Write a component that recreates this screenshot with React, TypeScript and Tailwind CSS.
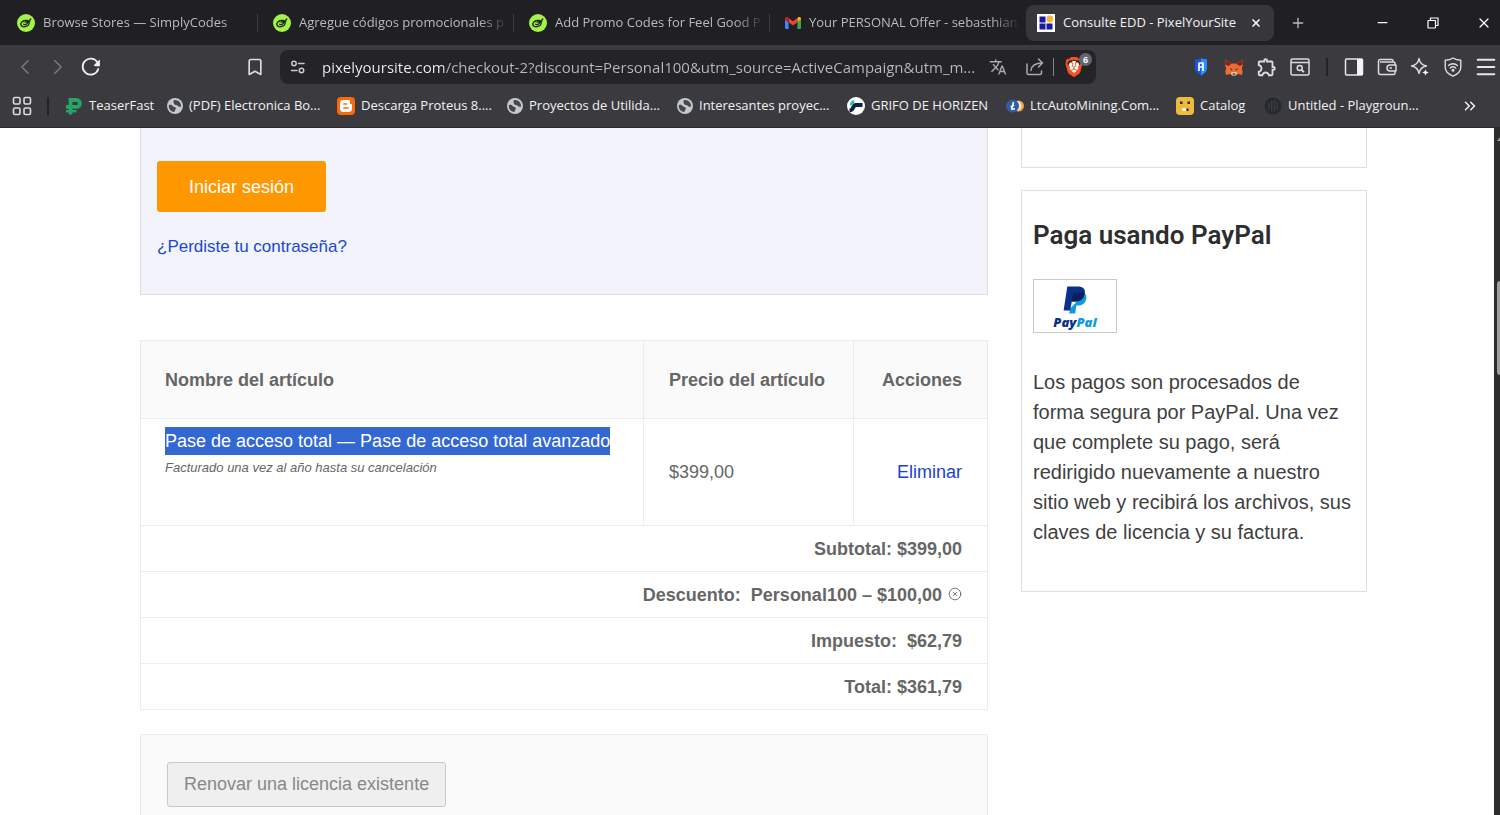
import type { ReactNode } from 'react';
import {
  Bookmark,
  ChevronLeft,
  ChevronRight,
  ChevronsRight,
  CircleX,
  Menu,
  Minus,
  Plus,
  X,
} from 'lucide-react';
import { MdOutlineExtension, MdTranslate } from 'react-icons/md';
import { SiBlogger, SiBrave } from 'react-icons/si';

const SimplyCodesIcon = () => (
  <svg viewBox="0 0 18 18" className="size-[18px] shrink-0">
    <circle cx="9" cy="9" r="9" fill="#a4f24a" />
    <ellipse
      cx="8"
      cy="9.6"
      rx="4.3"
      ry="3"
      transform="rotate(-20 8 9.6)"
      fill="none"
      stroke="#1c2a12"
      strokeWidth="1.5"
    />
    <path
      d="M6.6 10.2c1.600 1 3.200 0 4.200-1.600L13.800 5M8 8.200c1.500-.8 3-.6 4.800-.9"
      fill="none"
      stroke="#1c2a12"
      strokeWidth="1.3"
      strokeLinecap="round"
    />
  </svg>
);

const GmailIcon = () => (
  <svg viewBox="0 0 16 12" className="h-3 w-4 shrink-0">
    <path d="M0 2v9a1 1 0 0 0 1 1h2.600V5.200L0 2.500z" fill="#4285f4" />
    <path d="M12.400 5.200V12H15a1 1 0 0 0 1-1V2.500z" fill="#34a853" />
    <path d="M12.400 1v4.300L16 2.600V1.600C16 .2 14.400-.5 13.300.3z" fill="#fbbc04" />
    <path d="M3.600 5.300V1L8 4.300 12.400 1v4.300L8 8.600z" fill="#ea4335" />
    <path d="M0 1.600v1l3.600 2.700V1L2.700.3C1.600-.5 0 .2 0 1.600z" fill="#c5221f" />
  </svg>
);

const PixelIcon = () => (
  <svg viewBox="0 0 18 18" className="size-[18px] shrink-0">
    <path d="M0 0h18v18H0z" fill="#fff" />
    <path d="M2.500 2.500h6v6h-6zM2.500 9.500h6v6h-6zM9.500 9.500h6v6h-6z" fill="#1b1ba0" />
    <circle cx="12.800" cy="5" r="3.400" fill="#f4b63f" />
  </svg>
);

const TeaserFastIcon = () => (
  <svg viewBox="0 0 18 18" className="size-[18px] shrink-0" fill="none" stroke="#27a567">
    <path d="M5.500 17.500V3h6a3.400 3.400 0 0 1 0 6.800H1" strokeWidth="3.800" />
    <path d="M1 14.200h10.500" strokeWidth="2.400" />
  </svg>
);

const GlobeIcon = () => (
  <svg viewBox="0 0 16 16" className="size-4 shrink-0">
    <circle cx="8" cy="8" r="8" fill="#c4c7cb" />
    <path
      d="M1.800 7.200c1.200-.6 3.200-.5 3.800.8.500 1.200 3.500.5 3.200 2.700-.2 1.300-1.300 1.300-1.300 3.300C4 13.800 1.500 11 1.800 7.200zM7 2c3.900-.6 7.400 2.500 7.100 6.500-1.200.6-2.800.4-3.500-.7-.6-1-3.400-.4-3.700-2.200C6.800 4.300 5.900 3.500 7 2z"
      fill="#46474c"
    />
  </svg>
);

const HorizenIcon = () => (
  <svg viewBox="0 0 18 18" className="size-[18px] shrink-0">
    <circle cx="9" cy="9" r="9" fill="#fff" />
    <path d="M3 7a5 5 0 0 1 4-4l.5 3.500L3.500 9z" fill="#26c6b4" />
    <path d="M2.500 13.200H4c2 0 2-5.200 5-5.200h6.500" fill="none" stroke="#0e2145" strokeWidth="4" />
  </svg>
);

const LtcIcon = () => (
  <svg viewBox="0 0 18 14" className="h-[14px] w-[18px] shrink-0">
    <circle cx="12.500" cy="7" r="5.500" fill="#f0a23c" />
    <circle cx="10.500" cy="7" r="5" fill="#e8e8ee" />
    <circle cx="6.500" cy="7" r="6.500" fill="#345d9d" />
    <path d="M7.500 3 5.800 10H9M4.600 7.800l3.600-1.400" fill="none" stroke="#fff" strokeWidth="1.500" />
  </svg>
);

const CatalogIcon = () => (
  <svg viewBox="0 0 18 18" className="size-[18px] shrink-0">
    <rect width="18" height="18" rx="4" fill="#eebb3d" />
    <path d="M4 4.500h2.500V7H4zM11.500 4.500H14V7h-2.500zM10.500 11.500H12.500V14h-2z" fill="#33270c" />
    <path d="M6 11.200h4v2.600H6z" fill="#fff" />
  </svg>
);

const PlaygroundIcon = () => (
  <svg viewBox="0 0 18 18" className="size-[18px] shrink-0">
    <circle cx="9" cy="9" r="8.500" fill="#27292f" />
    <path d="M7.700 3.500v11M10.300 3.500v11M5 5.500v7M13 5.500v7" stroke="#3d4148" strokeWidth="1.200" />
  </svg>
);

const BloggerIcon = () => (
  <span className="flex size-[18px] shrink-0 items-center justify-center rounded-sm bg-[#f76b0e]">
    <svg viewBox="0 0 12 12" className="size-3">
      <rect width="12" height="12" rx="3.500" fill="#fff" />
      <path d="M3.800 4h2.700M3.800 8h4.400" stroke="#f76b0e" strokeWidth="1.500" strokeLinecap="round" />
      <path d="M10 0h2v4.200h-.8C10.300 4.200 10 3.500 10 2.500z" fill="#f76b0e" />
    </svg>
  </span>
);

const AppsIcon = () => (
  <svg viewBox="0 0 20 20" className="size-5" fill="none" stroke="#dcdce0" strokeWidth="1.600">
    <rect x="1.500" y="1.500" width="6.500" height="6.500" rx="1.500" />
    <rect x="12" y="1.500" width="6.500" height="6.500" rx="1.500" />
    <rect x="1.500" y="12" width="6.500" height="6.500" rx="1.500" />
    <rect x="12" y="12" width="6.500" height="6.500" rx="1.500" />
  </svg>
);

const ReloadIcon = () => (
  <svg viewBox="0 0 20 20" className="size-5" fill="none">
    <path d="M17.300 12A8 8 0 1 1 16.600 5.600" stroke="#f0f0f2" strokeWidth="1.800" strokeLinecap="round" />
    <path d="M18.900 2.500v6.700h-4.600c-1.300 0-1.500-1.300-.6-2z" fill="#f0f0f2" />
  </svg>
);

const TuneIcon = () => (
  <svg viewBox="0 0 16 16" className="size-4" fill="none" stroke="#c9c9ce" strokeWidth="1.500">
    <circle cx="4" cy="4.500" r="2.200" />
    <circle cx="11.500" cy="11.500" r="2.200" />
    <path d="M8.500 4.500H14M1.500 11.500H7" strokeLinecap="round" />
  </svg>
);

const ShareIcon = () => (
  <svg viewBox="0 0 20 20" className="size-5" fill="none" stroke="#a9a9ae" strokeWidth="1.500" strokeLinejoin="round" strokeLinecap="round">
    <path d="M2 7v9a1.500 1.500 0 0 0 1.500 1.500H15a1.500 1.500 0 0 0 1.500-1.500v-2" />
    <path d="M6 13.500C6.500 8.500 9.500 6 17.500 6M13.500 2l4 4-4 4" />
  </svg>
);

const ShieldExtensionIcon = () => (
  <svg viewBox="0 0 20 20" className="size-5">
    <path d="M4 2.500 10 1.500l6 1v8.500c0 3.500-3 5.800-6 7.500-3-1.700-6-4-6-7.500z" fill="#1557e0" />
    <path d="M10 1.500l6 1v8.500c0 3.500-3 5.800-6 7.500z" fill="#2f8cf5" />
    <path d="M8 14V5.500M12 14V5.500M8 10h4M8 6h4" stroke="#fff" strokeWidth="1.700" />
  </svg>
);

const FoxIcon = () => (
  <svg viewBox="0 0 20 20" className="size-5">
    <path d="M1.500 2.500 8 6.500h4l6.500-4 .5 5-1.200 4 .9 3.500-1 3-4-1-2 1.500H8L6.200 17l-4 1-1-3 1-3.500L1 7.500z" fill="#ee6b33" />
    <path d="M1.500 2.500 8 6.500 4.500 9 1 7.500zM18.500 2.500 12 6.500 15.500 9 19 7.500z" fill="#7d2a17" />
    <path d="M7.500 15h5l.5 2-1.500 1.500H8.300L7 17z" fill="#d9c5b6" />
    <path d="M5.500 11.500 8.500 12l-.5 1.500zM14.500 11.500l-3 .5.5 1.500z" fill="#2b2f38" />
    <path d="M8.500 16.500h3l-.5 1.200H9z" fill="#2b2f38" />
  </svg>
);

const SearchTabsIcon = () => (
  <svg viewBox="0 0 20 20" className="size-5" fill="none" stroke="#dcdce0" strokeWidth="1.500">
    <rect x="1" y="2" width="18" height="16" rx="1.500" />
    <path d="M1 5.500h18" />
    <circle cx="9.700" cy="11" r="2.500" />
    <path d="m11.600 13 2.400 2.200" strokeWidth="1.800" />
  </svg>
);

const SidebarIcon = () => (
  <svg viewBox="0 0 20 20" className="size-5">
    <rect x="1.500" y="2" width="17" height="16" rx="1" fill="none" stroke="#e6e6e8" strokeWidth="1.500" />
    <path d="M13 2h6v16h-6z" fill="#f4f4f5" />
  </svg>
);

const WalletIcon = () => (
  <svg viewBox="0 0 20 20" className="size-5" fill="none" stroke="#dcdce0" strokeWidth="1.500" strokeLinejoin="round">
    <path d="M18 8V6.500A1.500 1.500 0 0 0 16.500 5H3M18 14v2a1.500 1.500 0 0 1-1.500 1.500h-13A2 2 0 0 1 1.500 15.500V4A1.500 1.500 0 0 1 3 2.500h11.500A1.500 1.500 0 0 1 16 4v1" />
    <path d="M13 8h6v6h-6a3 3 0 0 1 0-6zM12.500 11H15" />
  </svg>
);

const SparkleIcon = () => (
  <svg viewBox="0 0 20 20" className="size-5" fill="none" stroke="#dcdce0" strokeWidth="1.500" strokeLinejoin="round">
    <path d="M9 1.500c.8 4.800 2.700 6.700 7.500 7.500-4.800.8-6.700 2.700-7.500 7.500C8.200 11.700 6.300 9.800 1.500 9 6.300 8.200 8.200 6.300 9 1.500z" />
    <path d="M15.500 12c.4 2.300 1.200 3.100 3.500 3.500-2.300.4-3.100 1.200-3.500 3.500-.4-2.300-1.200-3.100-3.500-3.500 2.300-.4 3.100-1.200 3.500-3.500z" fill="#f4f4f5" stroke="none" />
  </svg>
);

const VpnIcon = () => (
  <svg viewBox="0 0 20 20" className="size-5" fill="none" stroke="#dcdce0" strokeWidth="1.400" strokeLinecap="round" strokeLinejoin="round">
    <path d="M10 1c2 1.500 4.500 2.300 7.800 2.300V10c0 4.500-3.300 7.300-7.800 9.200C5.500 17.300 2.200 14.500 2.200 10V3.300C5.500 3.300 8 2.500 10 1z" />
    <path d="M5.500 8.500a6.500 6.500 0 0 1 9 0M7.300 11a4 4 0 0 1 5.400 0" />
    <circle cx="10" cy="13.300" r=".8" fill="#dcdce0" />
  </svg>
);

const RestoreIcon = () => (
  <svg viewBox="0 0 12 12" className="size-3" fill="none" stroke="#fff" strokeWidth="1.200">
    <rect x="1" y="3.500" width="7.500" height="7.500" rx=".5" />
    <path d="M3.500 3.500V1H11v7.500H8.500" />
  </svg>
);

const PayPalMark = () => (
  <svg viewBox="0 0 24 28" className="h-7 w-6">
    <path d="M21.300 7.300c1.900 1.300 2.400 3.400 1.800 6-1 4.600-4 6.200-8.300 6.200h-1.400L12.200 27.500H6.300l.8-4.800z" fill="#0f9be0" />
    <path d="M4.300.5h10.500c5 0 8 2.300 7 7.500-1.100 5.600-4.700 7.600-10.300 7.600H8.800L7.200 24.500H.6z" fill="#0a3087" />
    <path d="M10.300 6.500h8.200c1.200 0 2.200.3 2.900.8-1 5.700-4.300 8.300-9.900 8.300H8.800z" fill="#071f5c" />
  </svg>
);

interface TabData {
  title: string;
  icon: ReactNode;
}

const tabs: TabData[] = [
  { title: 'Browse Stores — SimplyCodes', icon: <SimplyCodesIcon /> },
  { title: 'Agregue códigos promocionales p', icon: <SimplyCodesIcon /> },
  { title: 'Add Promo Codes for Feel Good P', icon: <SimplyCodesIcon /> },
  { title: 'Your PERSONAL Offer - sebasthian', icon: <GmailIcon /> },
];

const bookmarks = [
  { title: 'TeaserFast', icon: <TeaserFastIcon />, width: 'w-[102px]' },
  { title: '(PDF) Electronica Bo...', icon: <GlobeIcon />, width: 'w-[170px]' },
  { title: 'Descarga Proteus 8....', icon: <BloggerIcon />, width: 'w-[170px]' },
  { title: 'Proyectos de Utilida...', icon: <GlobeIcon />, width: 'w-[170px]' },
  { title: 'Interesantes proyec...', icon: <GlobeIcon />, width: 'w-[170px]' },
  { title: 'GRIFO DE HORIZEN', icon: <HorizenIcon />, width: 'w-[159px]' },
  { title: 'LtcAutoMining.Com...', icon: <LtcIcon />, width: 'w-[170px]' },
  { title: 'Catalog', icon: <CatalogIcon />, width: 'w-[88px]' },
  { title: 'Untitled - Playgroun...', icon: <PlaygroundIcon />, width: 'w-[170px]' },
];

const totals = [
  { label: 'Subtotal:', value: '$399,00' },
  { label: 'Descuento:\u00a0', value: 'Personal100 – $100,00', removable: true },
  { label: 'Impuesto:\u00a0', value: '$62,79' },
  { label: 'Total:', value: '$361,79' },
];

const TabStrip = () => (
  <div className="flex h-[45px] items-center bg-[#1f1f24] pl-0.5 text-[13px] text-[#b9b9be]">
    <div className="flex min-w-0 items-center">
      {tabs.map((tab) => (
        <button
          key={tab.title}
          className="flex h-[18px] w-64 min-w-0 items-center gap-2 border-r border-[#3c3c42] pl-[15px] nth-4:border-transparent"
        >
          {tab.icon}
          <span className="min-w-0 flex-1 overflow-hidden text-left whitespace-nowrap [mask-image:linear-gradient(to_right,black_84%,transparent_98%)]">
            {tab.title}
          </span>
        </button>
      ))}
      <div className="flex h-9 w-[248px] min-w-0 items-center gap-2 rounded-lg bg-[#37373b] pr-3 pl-[11px] text-[#f1f1f3]">
        <PixelIcon />
        <span className="min-w-0 flex-1 overflow-hidden whitespace-nowrap">Consulte EDD - PixelYourSite</span>
        <button aria-label="Cerrar pestaña">
          <X className="size-3" strokeWidth={3.5} />
        </button>
      </div>
    </div>
    <button aria-label="Nueva pestaña" className="ml-4">
      <Plus className="size-4" strokeWidth={2} />
    </button>
    <div className="ml-auto flex items-center gap-[37px] pr-2 text-white">
      <button aria-label="Minimizar">
        <Minus className="size-[15px]" strokeWidth={2} />
      </button>
      <button aria-label="Restaurar">
        <RestoreIcon />
      </button>
      <button aria-label="Cerrar">
        <X className="size-4" strokeWidth={1.8} />
      </button>
    </div>
  </div>
);

const Toolbar = () => (
  <div className="flex h-11 items-center bg-[#3b3b3f] pr-1">
    <div className="flex w-[265px] shrink-0 items-center gap-[13px] pl-[15px]">
      <button aria-label="Atrás">
        <ChevronLeft className="size-5 scale-125 text-[#7b7b80]" strokeWidth={1.4} />
      </button>
      <button aria-label="Adelante">
        <ChevronRight className="size-5 scale-125 text-[#7b7b80]" strokeWidth={1.4} />
      </button>
      <button aria-label="Recargar">
        <ReloadIcon />
      </button>
      <button aria-label="Añadir marcador" className="ml-auto">
        <Bookmark className="size-5 text-[#dcdce0]" strokeWidth={2} />
      </button>
    </div>
    <div className="ml-[15px] flex h-[34px] min-w-0 flex-1 items-center rounded-lg bg-[#242428] pr-1 pl-[10px]">
      <TuneIcon />
      <input
        aria-label="Dirección"
        readOnly
        value="pixelyoursite.com/checkout-2?discount=Personal100&utm_source=ActiveCampaign&utm_m..."
        className="ml-4 min-w-0 flex-1 bg-[linear-gradient(90deg,#f1f1f3_122px,#b9b9be_122px)] bg-clip-text text-[15px] text-transparent outline-none"
      />
      <div className="flex shrink-0 items-center gap-2">
        <button aria-label="Traducir">
          <MdTranslate className="mr-2.5 size-[18px] text-[#a9a9ae]" />
        </button>
        <button aria-label="Compartir">
          <ShareIcon />
        </button>
        <span className="h-[18px] w-px bg-[#85858b]" />
        <button aria-label="Brave Shields" className="relative ml-0.5 mr-2">
          <span className="flex size-5 items-center justify-center bg-[radial-gradient(circle,white_40%,transparent_41%)]">
            <SiBrave className="size-5 text-[#f4511e]" />
          </span>
          <span className="absolute -top-1 -right-2 flex size-[13px] items-center justify-center rounded-full bg-[#63656f] text-[9px] font-bold text-white">
            6
          </span>
        </button>
      </div>
    </div>
    <div className="ml-[95px] flex shrink-0 items-center gap-[13px]">
      <button aria-label="Extensión"><ShieldExtensionIcon /></button>
      <button aria-label="MetaMask"><FoxIcon /></button>
      <button aria-label="Extensiones"><MdOutlineExtension className="size-5 scale-110 text-[#dcdce0]" /></button>
      <button aria-label="Buscar pestañas"><SearchTabsIcon /></button>
      <span className="mx-[3px] h-[18px] w-0.5 bg-[#242428]" />
      <button aria-label="Panel lateral"><SidebarIcon /></button>
      <button aria-label="Cartera"><WalletIcon /></button>
      <button aria-label="Leo"><SparkleIcon /></button>
      <button aria-label="VPN"><VpnIcon /></button>
      <button aria-label="Menú"><Menu className="size-5 scale-125 text-[#e6e6e8]" strokeWidth={1.8} /></button>
    </div>
  </div>
);

const BookmarksBar = () => (
  <nav className="flex h-[39px] items-center border-b border-[#2a2a2d] bg-[#3b3b3f] pb-1 pr-[21px] pl-3 text-[13px] text-[#f1f1f3]">
    <button aria-label="Aplicaciones">
      <AppsIcon />
    </button>
    <span className="mr-4 ml-[15px] h-[18px] w-0.5 bg-[#242428]" />
    {bookmarks.map((bookmark) => (
      <a key={bookmark.title} href="#" className={`flex shrink-0 items-center gap-1.5 whitespace-nowrap ${bookmark.width}`}>
        {bookmark.icon}
        {bookmark.title}
      </a>
    ))}
    <button aria-label="Más marcadores" className="ml-auto">
      <ChevronsRight className="size-[18px]" strokeWidth={2} />
    </button>
  </nav>
);

const CartTable = () => (
  <table className="mt-[45px] w-full table-fixed border-collapse border border-[#ececec] text-lg leading-7">
    <colgroup>
      <col />
      <col className="w-[210px]" />
      <col className="w-[134px]" />
    </colgroup>
    <thead className="bg-[#fafafa]">
      <tr className="h-[78px]">
        <th className="border border-[#ececec] px-6 text-left">Nombre del artículo</th>
        <th className="border border-[#ececec] px-[25px] text-left">Precio del artículo</th>
        <th className="border border-[#ececec] px-[25px] text-right">Acciones</th>
      </tr>
    </thead>
    <tbody>
      <tr className="h-[107px]">
        <td className="border border-[#ececec] px-6 py-2 align-top">
          <span className="inline-block bg-[#3367d1] text-white">
            Pase de acceso total — Pase de acceso total avanzado
          </span>
          <p className="text-[13px] leading-[26px] italic">Facturado una vez al año hasta su cancelación</p>
        </td>
        <td className="border border-[#ececec] px-[25px]">$399,00</td>
        <td className="border border-[#ececec] px-[25px] text-right">
          <a href="#" className="text-[#1a3fd6]">
            Eliminar
          </a>
        </td>
      </tr>
    </tbody>
    <tfoot>
      {totals.map((total) => (
        <tr key={total.label} className="h-[46px]">
          <th colSpan={3} className="border border-[#ececec] px-[25px] text-right">
            {total.label} {total.value}
            {total.removable && (
              <button aria-label="Quitar descuento" className="ml-1.5">
                <CircleX className="size-[14px]" strokeWidth={1.5} />
              </button>
            )}
          </th>
        </tr>
      ))}
    </tfoot>
  </table>
);

const PaymentSidebar = () => (
  <aside>
    <div className="h-10 border border-t-0 border-[#e0e0e0]" />
    <section className="mt-[22px] border border-[#e0e0e0] pt-7 pr-3 pb-11 pl-[11px] text-[#3f3f3f]">
      <h2 className="font-[Roboto,sans-serif] text-[26px] leading-8 font-semibold text-[#2e2e2e]">Paga usando PayPal</h2>
      <div className="mt-7 flex h-[54px] w-[84px] flex-col items-center justify-center border border-[#c9c9c9] pt-1">
        <PayPalMark />
        <span className="font-['Open_Sans',sans-serif] text-[13px] leading-4 font-extrabold text-[#0a3087] italic">
          Pay<span className="text-[#0f9be0]">Pal</span>
        </span>
      </div>
      <p className="mt-[34px] text-xl leading-[30px]">
        Los pagos son procesados de forma segura por PayPal. Una vez que complete su pago, será redirigido nuevamente a
        nuestro sitio web y recibirá los archivos, sus claves de licencia y su factura.
      </p>
    </section>
  </aside>
);

const CheckoutPage = () => (
  <div className="grid flex-1 grid-cols-[minmax(0,1fr)_346px] items-start gap-[33px] overflow-hidden bg-white pr-[127px] pl-[140px] font-['Liberation_Sans',Arial,sans-serif] text-[#666]">
    <main>
      <form className="border border-t-0 border-[#dedee2] bg-[#f3f3fc] px-4 pt-[33px] pb-8">
        <button type="button" className="h-[51px] rounded-[3px] bg-[#ff9800] px-8 text-lg text-white">
          Iniciar sesión
        </button>
        <p className="mt-5 text-[17px] leading-[30px]">
          <a href="#" className="text-[#1a48d0]">
            ¿Perdiste tu contraseña?
          </a>
        </p>
      </form>
      <CartTable />
      <div className="mt-6 border border-[#ececec] bg-[#fafafa] px-[26px] py-[27px]">
        <button className="h-[45px] rounded-[3px] border border-[#c9c9c9] bg-[#efefef] px-4 pb-0.5 text-lg text-[#888]">
          Renovar una licencia existente
        </button>
      </div>
    </main>
    <PaymentSidebar />
  </div>
);

const Scrollbar = () => (
  <div className="flex w-1.5 shrink-0 flex-col items-end overflow-hidden bg-[#2c2c2c] pt-2">
    <svg viewBox="0 0 3 5" className="h-[5px] w-[3px]">
      <path d="M0 5 3 1v4z" fill="#9f9f9f" />
    </svg>
    <div className="mt-[140px] h-[94px] w-[3px] rounded-l-full bg-[#9f9f9f]" />
  </div>
);

export default function App() {
  return (
    <div className="flex h-screen flex-col overflow-hidden font-['Open_Sans','Noto_Sans',sans-serif]">
      <header>
        <TabStrip />
        <Toolbar />
        <BookmarksBar />
      </header>
      <div className="flex min-h-0 flex-1">
        <CheckoutPage />
        <Scrollbar />
      </div>
    </div>
  );
}
